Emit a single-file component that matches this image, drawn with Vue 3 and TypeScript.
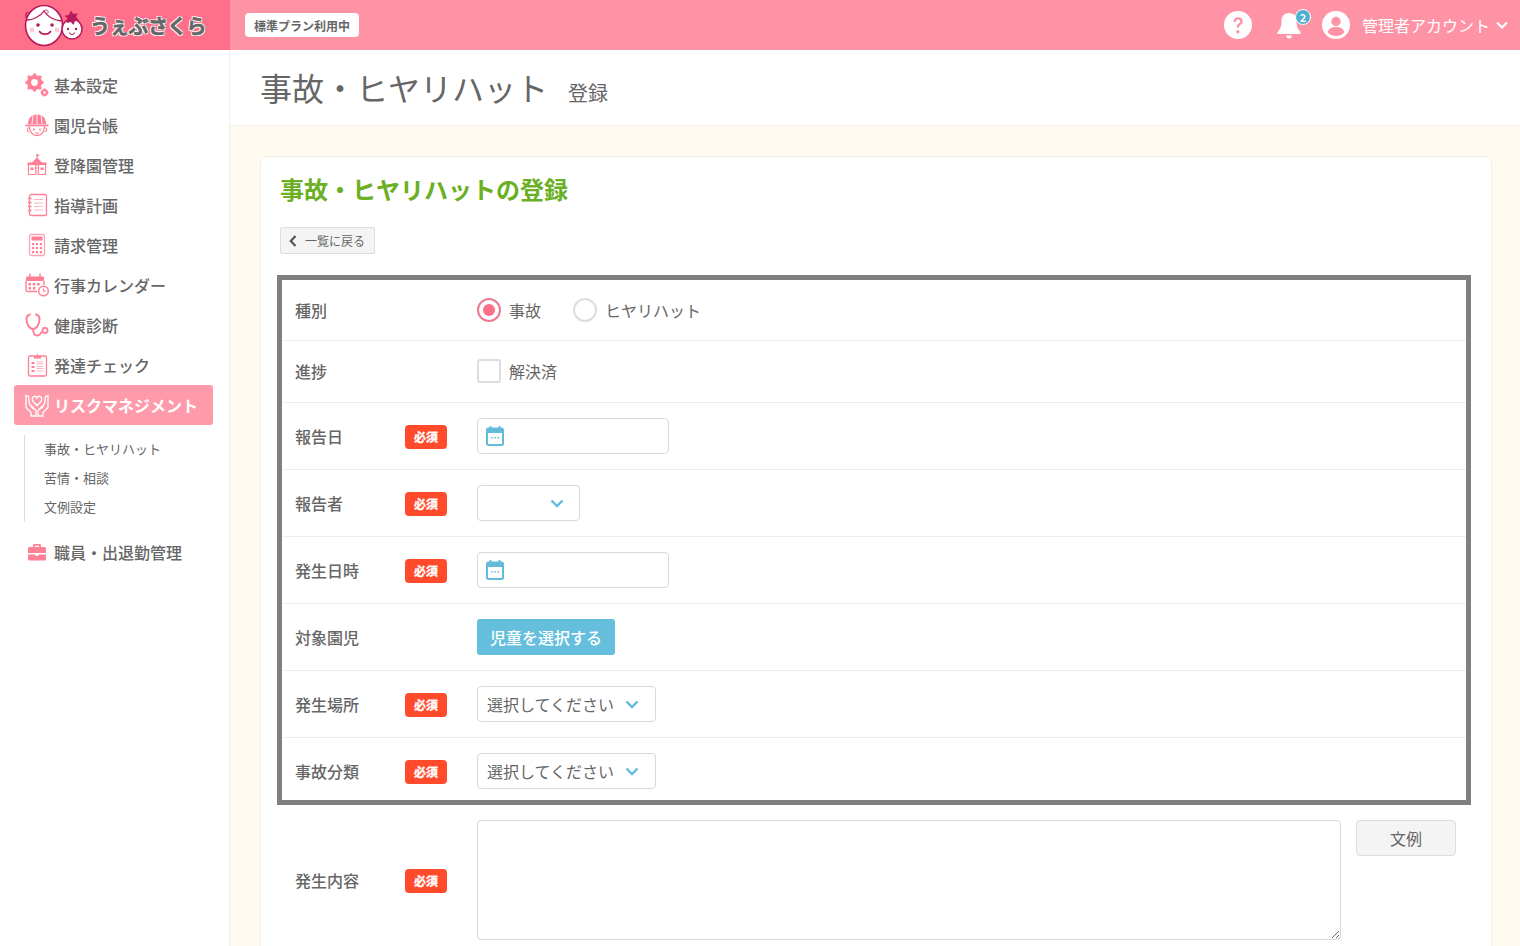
<template>
  <div class="app">
    <header class="topbar">
      <div class="brand">
        <svg class="brand-mark" viewBox="0 0 60 44" aria-hidden="true">
          <path d="M3 15c-2-2-1.500-5 1-6" fill="none" stroke="#b8195c" stroke-width="1.300" stroke-linecap="round" />
          <ellipse cx="20" cy="22.500" rx="18.500" ry="20" fill="#fff" stroke="#b8195c" stroke-width="1.600" />
          <path d="M3 17C8 17 16 14 20 8c3 5 9 9 17 10" fill="none" stroke="#b8195c" stroke-width="1.300" />
          <path d="M20 8c2-2 5-1 4 1.500-.6 1.500-2.500 1-2.300-.3" fill="none" stroke="#d0457c" stroke-width="1" />
          <circle cx="8" cy="27" r="2.400" fill="#ffc9d6" />
          <circle cx="33" cy="27" r="2.400" fill="#ffc9d6" />
          <circle cx="14" cy="22" r="1.800" fill="#b8195c" />
          <circle cx="28" cy="22" r="1.800" fill="#b8195c" />
          <path d="M15.500 28.500c2 3.500 9 3.500 11 0" fill="none" stroke="#b8195c" stroke-width="1.600" stroke-linecap="round" />
          <circle cx="48" cy="26" r="10" fill="#fff" stroke="#b8195c" stroke-width="1.500" />
          <circle cx="44" cy="26" r="1.200" fill="#b8195c" />
          <circle cx="52" cy="26" r="1.200" fill="#b8195c" />
          <path d="M45.500 30c1.500 2 3.500 2 5 0" fill="none" stroke="#b8195c" stroke-width="1.200" stroke-linecap="round" />
          <path d="M47 7.500l2.300 3.500 4.200-.8-1.400 4.100 3 3-4.200 .6-1.300 4.200-2.800-3.200-4.200 1 1.100-4.200-3-3 4.200-.8Z" fill="#b8195c" />
        </svg>
        <span class="brand-name">うぇぶさくら</span>
      </div>
      <span class="plan">標準プラン利用中</span>
      <div class="topbar-right">
        <svg class="top-icon" viewBox="0 0 28 28" aria-hidden="true">
          <circle cx="14" cy="14" r="14" fill="#fff" />
          <path d="M9.500 11c0-3 2-4.800 4.700-4.800 2.600 0 4.500 1.600 4.500 4 0 3.300-3.700 3.400-3.700 6.300h-2.300c0-4 3.500-4 3.500-6.200 0-1.100-.9-1.900-2.100-1.900-1.300 0-2.200 .9-2.300 2.600Z" fill="#ff93a6" />
          <circle cx="13.800" cy="20.700" r="1.700" fill="#ff93a6" />
        </svg>
        <div class="bell">
          <svg viewBox="0 0 26 30" class="bell-icon" aria-hidden="true">
            <path d="M13 3c-5 0-7.500 3.600-7.500 8 0 6-1.500 8.500-4 11v2h23v-2c-2.500-2.500-4-5-4-11 0-4.400-2.500-8-7.500-8Z" fill="#fff" />
            <path d="M10 25.500h6c-.5 2-1.500 3-3 3s-2.500-1-3-3Z" fill="#fff" />
          </svg>
          <span class="bell-count">2</span>
        </div>
        <svg class="top-icon" viewBox="0 0 28 28" aria-hidden="true">
          <circle cx="14" cy="14" r="14" fill="#fff" />
          <circle cx="14" cy="10.500" r="4.700" fill="#ff93a6" />
          <path d="M5.500 21c1.500-3.700 4.800-5 8.500-5s7 1.300 8.500 5c-2 2.500-5 4-8.500 4s-6.500-1.500-8.500-4Z" fill="#ff93a6" />
        </svg>
        <span class="account">管理者アカウント</span>
        <svg class="account-caret" viewBox="0 0 12 8" aria-hidden="true">
          <path d="M1 1.500 6 6.500l5-5" fill="none" stroke="#fff" stroke-width="2.200" />
        </svg>
      </div>
    </header>

    <div class="body">
      <aside class="sidebar">
        <nav>
          <template v-for="item in navItems" :key="item.label">
            <a class="nav-item" :class="{ active: item.active }">
              <svg class="nav-icon" viewBox="0 0 24 24" v-html="item.icon" aria-hidden="true"></svg>
              <span>{{ item.label }}</span>
            </a>
            <ul v-if="item.active" class="subnav">
              <li v-for="sub in subItems" :key="sub">{{ sub }}</li>
            </ul>
          </template>
        </nav>
      </aside>

      <main class="main">
        <div class="page-head">
          <h1>事故・ヒヤリハット</h1>
          <span class="page-sub">登録</span>
        </div>
        <div class="content">
          <section class="card">
            <h2>事故・ヒヤリハットの登録</h2>
            <button class="back" type="button">
              <svg viewBox="0 0 8 12" aria-hidden="true">
                <path d="M6.500 1 1.800 6l4.700 5" fill="none" stroke="#555" stroke-width="2.200" />
              </svg>
              一覧に戻る
            </button>

            <div class="frame">
              <div class="row row-first">
                <div class="label">種別</div>
                <div class="control gap-radio">
                  <label class="choice"><span class="radio on"></span>事故</label>
                  <label class="choice"><span class="radio"></span>ヒヤリハット</label>
                </div>
              </div>
              <div class="row row-second">
                <div class="label">進捗</div>
                <div class="control">
                  <label class="choice"><span class="check"></span>解決済</label>
                </div>
              </div>
              <div class="row">
                <div class="label">報告日<span class="req">必須</span></div>
                <div class="control">
                  <div class="date">
                    <svg viewBox="0 0 18 20" aria-hidden="true" v-html="calendarIcon"></svg>
                  </div>
                </div>
              </div>
              <div class="row">
                <div class="label">報告者<span class="req">必須</span></div>
                <div class="control">
                  <div class="select select-short">
                    <svg viewBox="0 0 14 9" aria-hidden="true" v-html="caretIcon"></svg>
                  </div>
                </div>
              </div>
              <div class="row">
                <div class="label">発生日時<span class="req">必須</span></div>
                <div class="control">
                  <div class="date">
                    <svg viewBox="0 0 18 20" aria-hidden="true" v-html="calendarIcon"></svg>
                  </div>
                </div>
              </div>
              <div class="row">
                <div class="label">対象園児</div>
                <div class="control">
                  <button class="pick" type="button">児童を選択する</button>
                </div>
              </div>
              <div class="row">
                <div class="label">発生場所<span class="req">必須</span></div>
                <div class="control">
                  <div class="select select-text">
                    選択してください
                    <svg viewBox="0 0 14 9" aria-hidden="true" v-html="caretIcon"></svg>
                  </div>
                </div>
              </div>
              <div class="row row-last">
                <div class="label">事故分類<span class="req">必須</span></div>
                <div class="control">
                  <div class="select select-text">
                    選択してください
                    <svg viewBox="0 0 14 9" aria-hidden="true" v-html="caretIcon"></svg>
                  </div>
                </div>
              </div>
            </div>

            <div class="row-text">
              <div class="label">発生内容<span class="req">必須</span></div>
              <textarea class="area"></textarea>
              <button class="example" type="button">文例</button>
            </div>
          </section>
        </div>
      </main>
    </div>
  </div>
</template>

<script setup lang="ts">
interface NavItem {
  label: string;
  icon: string;
  active?: boolean;
}

const pink = '#ff7f96';

const navItems: NavItem[] = [
  {
    label: '基本設定',
    icon: `<circle cx="9.500" cy="9.500" r="5.500" fill="none" stroke="${pink}" stroke-width="4.200"/><path d="M9.500 .5v3.500M9.500 15v3.500M.5 9.500H4M15 9.500h3.500M3 3l2.500 2.500M13.500 13.500 16 16M3 16l2.500-2.500M13.500 5.500 16 3" stroke="${pink}" stroke-width="3"/><circle cx="19.500" cy="19.500" r="2.400" fill="none" stroke="${pink}" stroke-width="2.200"/><path d="M19.500 15.500v1.500M19.500 22v1.500M15.500 19.500H17M22 19.500h1.500" stroke="${pink}" stroke-width="1.500"/>`,
  },
  {
    label: '園児台帳',
    icon: `<path d="M3 11C3 5 6.500 1.500 12 1.500S21 5 21 11Z" fill="${pink}"/><path d="M12 1.500V11M8 2.500 7 11M16 2.500l1 8.500" stroke="#fff" stroke-width=".8"/><path d="M.5 11.500h23v1.800H.5Z" fill="${pink}"/><path d="M4.500 13.500c0 5.500 3.300 9 7.500 9s7.500-3.500 7.500-9" fill="none" stroke="${pink}" stroke-width="1.300"/><path d="M4.500 14.500c-3 .5-3 4 0 4.500M19.500 14.500c3 .5 3 4 0 4.500" fill="none" stroke="${pink}" stroke-width="1.100"/><circle cx="9" cy="16.500" r="1" fill="${pink}"/><circle cx="15" cy="16.500" r="1" fill="${pink}"/><path d="M10 19.500c1 1 3 1 4 0" fill="none" stroke="${pink}"/>`,
  },
  {
    label: '登降園管理',
    icon: `<path d="M12 1v4" stroke="${pink}" stroke-width="1.200"/><path d="M12 1l3 1.300-3 1.300Z" fill="${pink}"/><path d="M12 4.500 7 9.500H2.500v2.500h19V9.500H17Z" fill="${pink}"/><path d="M3.500 12v9.500h7V12M13.500 12v9.500h7V12" fill="none" stroke="${pink}" stroke-width="1.200"/><path d="M5.500 14.500h3v2.500h-3ZM15.500 14.500h3v2.500h-3Z" fill="${pink}"/><circle cx="12" cy="13.500" r="1.700" fill="#fff" stroke="${pink}"/><path d="M10.500 21.500h3v-5h-3Z" fill="#ffc4cf"/>`,
  },
  {
    label: '指導計画',
    icon: `<rect x="4.500" y="1.500" width="17" height="21" rx="2" fill="none" stroke="${pink}" stroke-width="1.300"/><path d="M9 6.500h9M9 10h9M9 13.500h9M9 17h9" stroke="#ffb4c2" stroke-width="1.100"/><path d="M3 5.500h3.500M3 9.500h3.500M3 13.500h3.500M3 17.500h3.500" stroke="${pink}" stroke-width="1.300"/>`,
  },
  {
    label: '請求管理',
    icon: `<rect x="4.500" y="1.500" width="15" height="21" rx="2" fill="none" stroke="#ffa4b5" stroke-width="1.300"/><rect x="6.500" y="3.500" width="11" height="4" fill="${pink}"/><path d="M7 10h2.200v2.200H7ZM10.900 10h2.200v2.200h-2.200ZM14.800 10H17v2.200h-2.200ZM7 14h2.200v2.200H7ZM10.900 14h2.200v2.200h-2.200ZM14.800 14H17v2.200h-2.200ZM7 18h2.200v2.200H7ZM10.900 18h2.200v2.200h-2.200ZM14.800 18H17v2.200h-2.200Z" fill="${pink}"/>`,
  },
  {
    label: '行事カレンダー',
    icon: `<path d="M1 8V5C1 4 1.700 3.500 2.500 3.500h15c.8 0 1.500 .5 1.500 1.500v3Z" fill="${pink}"/><path d="M5 .5v4.500M15 .5v4.500" stroke="${pink}" stroke-width="1.400"/><path d="M1 8v9c0 .8 .7 1.500 1.500 1.500H12M19 8v4" fill="none" stroke="${pink}" stroke-width="1.400"/><path d="M3.500 10h2.500v2.500H3.500ZM7.800 10h2.500v2.500H7.800ZM12.100 10h2.500v2.500h-2.500ZM3.500 14h2.500v2.500H3.500ZM7.800 14h2.500v2.500H7.800Z" fill="${pink}"/><circle cx="18.500" cy="18" r="4.800" fill="#fff" stroke="${pink}" stroke-width="1.500"/><path d="M18.500 15.500V18h2.600" fill="none" stroke="${pink}" stroke-width="1.100"/>`,
  },
  {
    label: '健康診断',
    icon: `<path d="M5 1.500C2.500 2 1.500 3.500 1.500 6c0 5.500 3 10 6.500 10s6.500-4.500 6.500-10c0-2.500-1-4-3.500-4.500" fill="none" stroke="${pink}" stroke-width="2" stroke-linecap="round"/><path d="M8 16c0 4.500 2 6.500 4.500 6.500 3.500 0 3.500-4 5-4.500" fill="none" stroke="${pink}" stroke-width="1.800"/><circle cx="20" cy="17.500" r="2.600" fill="none" stroke="${pink}" stroke-width="1.700"/>`,
  },
  {
    label: '発達チェック',
    icon: `<rect x="3.500" y="3" width="18" height="20" rx="1.500" fill="none" stroke="${pink}" stroke-width="1.300"/><path d="M9 3h7v2.500H9ZM12 1h1.200v2H12Z" fill="${pink}"/><path d="M6.500 9h3v2h-3ZM6.500 13h3v2h-3ZM6.500 17h3v2h-3Z" fill="${pink}"/><path d="M11.500 9h7M11.500 11h7M11.500 13.500h7M11.500 15.500h7M11.500 18h7" stroke="#ffb4c2" stroke-width="1"/>`,
  },
  {
    label: 'リスクマネジメント',
    active: true,
    icon: `<path d="M12 12.500 8.200 8.700C6.500 7 7.300 3.300 9.700 3.300c1.300 0 1.900 .8 2.300 1.800.4-1 1-1.800 2.300-1.800 2.400 0 3.200 3.700 1.500 5.400Z" fill="none" stroke="#fff" stroke-width="1.400"/><path d="M1 2.500l2.500 1 1 7.500 6.500 6.500V23H6v-3.500L1 14.500Z" fill="none" stroke="#fff" stroke-width="1.300"/><path d="M23 2.500l-2.500 1-1 7.500-6.500 6.500V23H18v-3.500l5-5Z" fill="none" stroke="#fff" stroke-width="1.300"/><path d="M5.500 13l3 3M18.500 13l-3 3" stroke="#fff" stroke-width="1.100"/>`,
  },
  {
    label: '職員・出退勤管理',
    icon: `<path d="M8 7V5.500C8 4.700 8.700 4 9.500 4h5c.8 0 1.500 .7 1.500 1.500V7h-1.700V5.800H9.700V7Z" fill="${pink}"/><path d="M3 8.500C3 7.700 3.700 7 4.500 7h15c.8 0 1.500 .7 1.500 1.500V13H3Z" fill="${pink}"/><path d="M3 14.500h7.500v1.500h3v-1.500H21V19c0 .8-.7 1.500-1.500 1.500h-15C3.700 20.500 3 19.800 3 19Z" fill="${pink}"/>`,
  },
];

const subItems: string[] = ['事故・ヒヤリハット', '苦情・相談', '文例設定'];

const calendarIcon = `<path d="M4.500 0v4M13.500 0v4" stroke="#62bcd9" stroke-width="1.800"/><rect x="1" y="2.500" width="16" height="16.500" rx="1.500" fill="#fff" stroke="#62bcd9" stroke-width="2"/><path d="M1 3h16v4H1Z" fill="#62bcd9"/><path d="M5 11h1.500v1.500H5ZM8.300 11h1.500v1.500H8.300ZM11.500 11H13v1.500h-1.500Z" fill="#62bcd9"/>`;
const caretIcon = `<path d="M1.500 1.500 7 7l5.500-5.500" fill="none" stroke="#62bcd9" stroke-width="2.400"/>`;
</script>

<style>
html,
body {
  margin: 0;
  background: #fff;
}
</style>

<style scoped>
* {
  box-sizing: border-box;
}

.app {
  width: 1520px;
  height: 946px;
  overflow: hidden;
  font-family: "Noto Sans CJK JP", "Noto Sans", sans-serif;
  color: #666;
  font-size: 16px;
}

/* top bar */
.topbar {
  display: flex;
  align-items: center;
  height: 50px;
  background: #ff93a6;
}

.brand {
  display: flex;
  align-items: center;
  width: 230px;
  height: 50px;
  padding-left: 24px;
  background: #ff6f8a;
}

.brand-mark {
  width: 60px;
  height: 44px;
  flex: none;
}

.brand-name {
  margin-left: 6px;
  font-size: 20px;
  font-weight: 700;
  color: #666;
  -webkit-text-stroke: 0.6px #666;
  text-shadow: 1px 1px 0 #fff, -1px -1px 0 #fff, 1px -1px 0 #fff, -1px 1px 0 #fff;
  letter-spacing: -0.7px;
  white-space: nowrap;
}

.plan {
  display: flex;
  align-items: center;
  margin-left: 15px;
  height: 24px;
  padding: 0 9px;
  background: #fff;
  border-radius: 4px;
  font-size: 12px;
  font-weight: 700;
  color: #666;
}

.topbar-right {
  display: flex;
  align-items: center;
  margin-left: auto;
  padding-right: 12px;
  color: #fff;
}

.top-icon {
  width: 28px;
  height: 28px;
  flex: none;
}

.bell {
  position: relative;
  width: 26px;
  height: 30px;
  margin: 0 20px 0 24px;
}

.bell-icon {
  width: 26px;
  height: 30px;
  display: block;
}

.bell-count {
  position: absolute;
  top: -1px;
  right: -9px;
  width: 16px;
  height: 16px;
  border-radius: 50%;
  background: #4eb0d0;
  border: 1px solid #fff;
  color: #fff;
  font-size: 11px;
  font-weight: 700;
  line-height: 14px;
  text-align: center;
}

.account {
  margin-left: 12px;
}

.account-caret {
  width: 12px;
  height: 8px;
  margin-left: 6px;
}

/* layout */
.body {
  display: flex;
  height: 896px;
}

.sidebar {
  flex: none;
  width: 229px;
  padding: 15px 16px 0 14px;
  background: #fff;
}

.nav-item {
  display: flex;
  align-items: center;
  height: 40px;
  padding-left: 11px;
  border-radius: 3px;
  font-weight: 500;
  white-space: nowrap;
}

.nav-item.active {
  background: #ff9aab;
  color: #fff;
  font-weight: 700;
}

.nav-icon {
  width: 24px;
  height: 24px;
  margin-right: 5px;
  flex: none;
}

.subnav {
  list-style: none;
  margin: 10px 0 10px 10px;
  padding: 0 0 0 19px;
  border-left: 1px solid #ddd;
  font-size: 13px;
}

.subnav li {
  height: 29px;
  line-height: 27px;
}

.main {
  flex: 1;
  min-width: 0;
  border-left: 1px solid #f2efe6;
}

.page-head {
  display: flex;
  align-items: baseline;
  height: 76px;
  padding: 13px 0 0 30px;
  background: #fff;
  border-bottom: 1px solid #f3efe4;
}

h1 {
  margin: 0;
  font-size: 32px;
  font-weight: 400;
  line-height: 48px;
}

.page-sub {
  margin-left: 20px;
  font-size: 20px;
}

.content {
  height: 820px;
  padding: 30px 28px 0 30px;
  background: #fffaf0;
}

.card {
  height: 800px;
  padding: 16px 20px 0 19px;
  background: #fff;
  border: 1px solid #f3efe4;
  border-radius: 6px;
}

h2 {
  margin: 0;
  font-size: 24px;
  font-weight: 700;
  line-height: 32px;
  color: #6aaf24;
}

.back {
  display: flex;
  align-items: center;
  width: 95px;
  height: 27px;
  margin: 22px 0 0;
  padding: 0 0 0 8px;
  background: #f4f4f4;
  border: 1px solid #ddd;
  border-radius: 2px;
  font: inherit;
  font-size: 12px;
  color: #666;
}

.back svg {
  width: 8px;
  height: 12px;
  margin-right: 8px;
}

/* highlighted block of rows */
.frame {
  margin: 21px 0 0 -3px;
  width: 1194px;
  height: 530px;
  border: 5px solid #808080;
}

.row {
  display: flex;
  height: 67px;
  border-bottom: 1px solid #eee;
}

.row-first {
  height: 61px;
  padding-bottom: 1px;
}

.row-second {
  height: 62px;
  padding-bottom: 2px;
}

.row-last {
  height: 66px;
  border-bottom: 0;
}

.label {
  display: flex;
  align-items: center;
  flex: none;
  width: 195px;
  padding-left: 13px;
  position: relative;
  font-weight: 500;
}

.req {
  position: absolute;
  left: 123px;
  top: 50%;
  width: 42px;
  height: 24px;
  margin-top: -11px;
  background: #ff4b2b;
  border-radius: 4px;
  color: #fff;
  font-size: 12px;
  font-weight: 700;
  -webkit-text-stroke: 0.3px #fff;
  line-height: 24px;
  text-align: center;
}

.control {
  display: flex;
  align-items: center;
}

.gap-radio {
  gap: 32px;
}

.choice {
  display: flex;
  align-items: center;
}

.radio {
  position: relative;
  width: 24px;
  height: 24px;
  margin-right: 8px;
  border: 2px solid #ddd;
  border-radius: 50%;
  background: #fff;
}

.radio.on {
  border-color: #e97c92;
}

.radio.on::after {
  content: "";
  position: absolute;
  inset: 4px;
  border-radius: 50%;
  background: #ff6f8a;
}

.check {
  width: 24px;
  height: 24px;
  margin-right: 8px;
  border: 2px solid #ddd;
  border-radius: 3px;
  background: #fff;
}

.date {
  display: flex;
  align-items: center;
  width: 192px;
  height: 36px;
  padding-left: 8px;
  border: 1px solid #d8d8d8;
  border-radius: 4px;
}

.date svg {
  width: 18px;
  height: 20px;
}

.select {
  display: flex;
  align-items: center;
  height: 36px;
  border: 1px solid #d8d8d8;
  border-radius: 4px;
  white-space: nowrap;
}

.select svg {
  width: 14px;
  height: 9px;
  flex: none;
}

.select-short {
  width: 103px;
  padding-left: 72px;
}

.select-text {
  width: 179px;
  padding-left: 9px;
}

.select-text svg {
  margin-left: 11px;
}

.pick {
  width: 138px;
  height: 36px;
  padding: 0;
  background: #65bfdc;
  border: 0;
  border-radius: 3px;
  font: inherit;
  font-weight: 500;
  color: #fff;
}

.row-text {
  display: flex;
  height: 120px;
  margin: 15px 0 0 -3px;
}

.row-text .label {
  width: 200px;
  padding-left: 18px;
}

.row-text .req {
  left: 128px;
}

.area {
  width: 864px;
  height: 120px;
  background: #fff;
  border: 1px solid #d8d8d8;
  border-radius: 4px;
  outline: 0;
}

.example {
  width: 100px;
  height: 36px;
  margin-left: 15px;
  background: #f4f4f4;
  border: 1px solid #ddd;
  border-radius: 4px;
  font: inherit;
  color: #666;
}
</style>
